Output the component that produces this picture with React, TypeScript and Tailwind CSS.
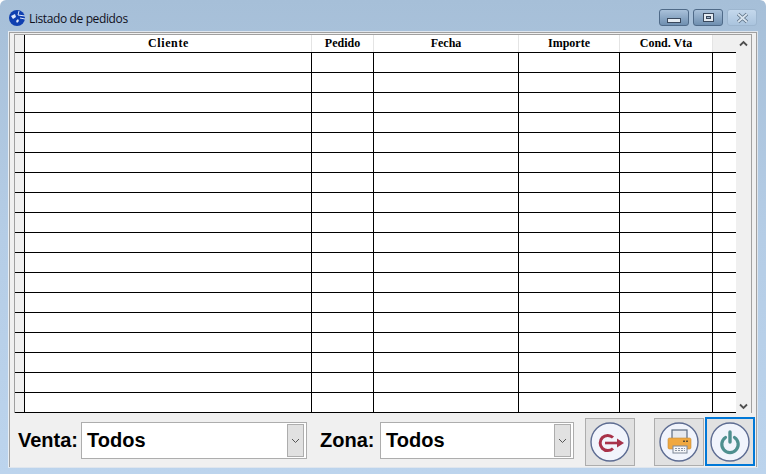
import React from 'react';

const rows = Array.from({ length: 18 }, (_, i) => i);

const columns = [
  { label: 'Cliente', width: 'w-[287px]', extra: 'tracking-[0.6px] pl-[1px]' },
  { label: 'Pedido', width: 'w-[62px]', extra: '' },
  { label: 'Fecha', width: 'w-[145px]', extra: '' },
  { label: 'Importe', width: 'w-[101px]', extra: '' },
  { label: 'Cond. Vta', width: 'w-[93px]', extra: '' },
];

const AppIcon = () => (
  <svg width="18" height="18" viewBox="0 0 18 18">
    <circle cx="9" cy="9" r="8" fill="#0f3fb0" />
    <path d="M3 7 L7 5 L8 8 L5 10 Z" fill="#dfe8fa" />
    <path d="M8 12 L10 10 L11 12 L9 14 Z" fill="#dfe8fa" />
    <path d="M11 2 L10 6 L17 7" fill="none" stroke="#dfe8fa" strokeWidth="1" />
    <path d="M12 9 L17 10" stroke="#dfe8fa" strokeWidth="1" />
  </svg>
);

const CaptionButton = ({ kind }: { kind: 'min' | 'max' | 'close' }) => {
  if (kind === 'close') {
    return (
      <div className="w-[30px] h-[17px] flex items-center justify-center rounded-[3px] border border-[#9db6cf] bg-gradient-to-b from-[#c4d8ec] to-[#aac4de]">
        <svg width="15" height="12" viewBox="0 0 15 12">
          <path d="M3 2 L12 10 M12 2 L3 10" stroke="#5f7488" strokeWidth="3.6" />
          <path d="M3 2 L12 10 M12 2 L3 10" stroke="#d8e4ef" strokeWidth="1.8" />
        </svg>
      </div>
    );
  }
  return (
    <div className="w-[30px] h-[17px] flex items-center justify-center rounded-[3px] border border-[#4f6a88] bg-gradient-to-b from-[#a9c1da] to-[#6f8fb0]">
      {kind === 'min' ? (
        <div className="w-[14px] h-[5px] mt-[5px] border border-[#39485c] bg-[#e4ebf2]" />
      ) : (
        <div className="w-[11px] h-[9px] border border-[#39485c] bg-[#e4ebf2] flex items-center justify-center">
          <div className="w-[5px] h-[3px] border border-[#39485c] bg-[#9fb3c9]" />
        </div>
      )}
    </div>
  );
};

const Combo = ({ width }: { width: string }) => (
  <div className={`${width} shrink-0 h-[37px] flex items-center justify-between bg-white border border-[#adadad] pl-[5px] pr-[2px]`}>
    <span className="mb-[2px] text-[20px] font-bold text-black leading-none font-['Liberation_Sans',sans-serif]">Todos</span>
    <div className="w-[17px] h-[33px] flex items-center justify-center bg-[#e1e1e1] border border-[#adadad]">
      <svg width="9" height="6" viewBox="0 0 9 6">
        <path d="M1 1 L4.5 4.5 L8 1" fill="none" stroke="#555" strokeWidth="1" />
      </svg>
    </div>
  </div>
);

const IconCircle = ({ children }: { children: React.ReactNode }) => (
  <svg width="40" height="40" viewBox="0 0 40 40">
    <circle cx="20" cy="20" r="19" fill="#f1f4fc" stroke="#5d6c92" strokeWidth="1.4" />
    {children}
  </svg>
);

const ExitIcon = () => (
  <IconCircle>
    <path d="M23 15.5 A7.6 7.6 0 1 0 23 26.5" fill="none" stroke="#a8324a" strokeWidth="3" />
    <path d="M15 21 H30" stroke="#a8324a" strokeWidth="2.6" />
    <path d="M27 16.5 L34 21 L27 25.5 Z" fill="#a8324a" />
  </IconCircle>
);

const PrintIcon = () => (
  <IconCircle>
    <rect x="13" y="8" width="15" height="9" fill="#e6e9ee" stroke="#5a6a80" strokeWidth="1.2" />
    <rect x="9" y="16" width="23" height="11" rx="1.5" fill="#f0a840" stroke="#c58a35" strokeWidth="0.6" />
    <rect x="24" y="18.5" width="2" height="1.5" fill="#5d4c30" />
    <rect x="27" y="18.5" width="2" height="1.5" fill="#5d4c30" />
    <rect x="14" y="24" width="14" height="7" fill="#f5f6f8" stroke="#7d8696" strokeWidth="1" />
    <path d="M16 26.5 H26 M16 28.5 H26" stroke="#8d96a6" strokeWidth="1" strokeDasharray="2 1" />
  </IconCircle>
);

const PowerIcon = () => (
  <IconCircle>
    <path d="M15.5 15.5 A8.2 8.2 0 1 0 24.5 15.5" fill="none" stroke="#4e8f8f" strokeWidth="3.2" strokeLinecap="round" />
    <path d="M20 10 V20" stroke="#4e8f8f" strokeWidth="3.4" strokeLinecap="round" />
  </IconCircle>
);

const App: React.FC = () => {
  return (
    <div className="w-[766px] h-[474px] flex flex-col overflow-hidden rounded-t-[6px] bg-gradient-to-b from-[#a6bfd8] via-[#b5cde6] to-[#bcd4ed] font-['Liberation_Sans',sans-serif]">
      {/* title bar */}
      <div className="h-[31px] shrink-0 flex items-start pl-[8px] pr-[9px] pt-[9px]">
        <AppIcon />
        <span className="ml-[3px] mt-[2px] text-[12px] leading-[16px] text-[#10101c] font-['Open_Sans',sans-serif] tracking-[-0.38px]">Listado de pedidos</span>
        <div className="ml-auto flex gap-[4px]">
          <CaptionButton kind="min" />
          <CaptionButton kind="max" />
          <CaptionButton kind="close" />
        </div>
      </div>

      {/* client area */}
      <div className="mx-[8px] h-[437px] border border-[#dfe6ee] border-l-[#e8eef4] bg-[#f0f0f0]">
        <div className="h-full border border-[#a0a0a0] border-b-0 bg-[#f0f0f0] pt-[1px] pl-[4px] pr-[4px]">
          {/* grid */}
          <div className="w-[738px] h-[379px] flex border border-[#a0a0a0] border-b-0 bg-white">
            <div className="w-[721px] flex flex-col">
              <div className="h-[18px] flex border-b border-black font-['Liberation_Serif',serif] font-bold text-[12px] text-black">
                <div className="w-[10px] bg-[#f0f0f0] border-r border-black" />
                {columns.map((col) => (
                  <div key={col.label} className={`${col.width} ${col.extra} flex items-center justify-center border-r border-[#e4e4e4] pb-[1px]`}>
                    {col.label}
                  </div>
                ))}
                <div className="w-[23px] bg-[#f0f0f0]" />
              </div>
              {rows.map((r) => (
                <div key={r} className="h-[20px] flex border-b border-black">
                  <div className="w-[10px] bg-[#f0f0f0] border-r border-black" />
                  {columns.map((col) => (
                    <div key={col.label} className={`${col.width} border-r border-black`} />
                  ))}
                  <div className="w-[23px]" />
                </div>
              ))}
            </div>
            {/* scrollbar */}
            <div className="w-[16px] flex flex-col justify-between bg-[#f0f0f0] pt-[5px] pb-[3px] items-center">
              <svg width="9" height="7" viewBox="0 0 9 7">
                <path d="M1 5.5 L4.5 2 L8 5.5" fill="none" stroke="#505050" strokeWidth="1.8" />
              </svg>
              <svg width="9" height="7" viewBox="0 0 9 7">
                <path d="M1 1.5 L4.5 5 L8 1.5" fill="none" stroke="#505050" strokeWidth="1.8" />
              </svg>
            </div>
          </div>

          {/* bottom bar */}
          <div className="flex items-start">
            <div className="flex items-center mt-[9px] shrink-0">
              <span className="ml-[4px] mb-[2px] w-[63px] shrink-0 text-[20px] leading-none font-bold text-black">Venta:</span>
              <Combo width="w-[226px]" />
              <span className="ml-[13px] mb-[2px] w-[60px] shrink-0 text-[20px] leading-none font-bold text-black">Zona:</span>
              <Combo width="w-[194px]" />
            </div>
            <div className="ml-[11px] mt-[5px] w-[50px] h-[48px] shrink-0 flex items-center justify-center bg-[#e1e1e1] border border-[#adadad]">
              <ExitIcon />
            </div>
            <div className="ml-[19px] mt-[5px] w-[50px] h-[48px] shrink-0 flex items-center justify-center bg-[#e1e1e1] border border-[#adadad]">
              <PrintIcon />
            </div>
            <div className="ml-[1px] mt-[4px] w-[50px] h-[49px] shrink-0 flex items-center justify-center bg-[#e1e1e1] border-2 border-[#0078d7]">
              <PowerIcon />
            </div>
          </div>
        </div>
      </div>
    </div>
  );
};

export default App;
